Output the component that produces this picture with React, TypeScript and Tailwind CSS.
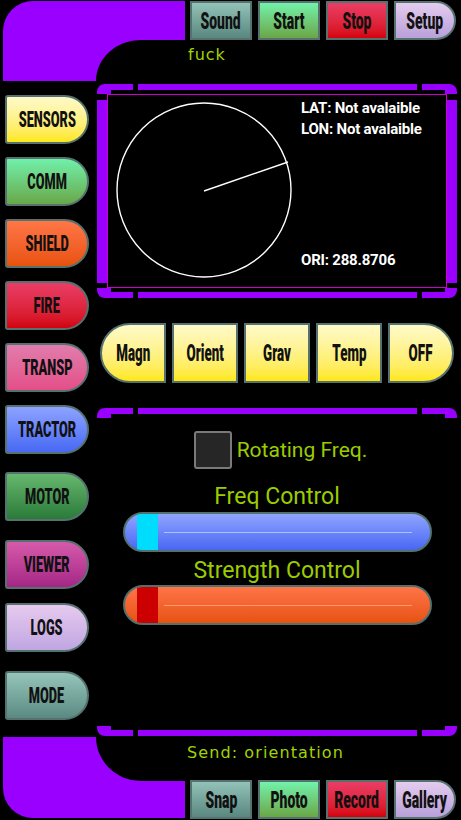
const PURPLE = "bg-[#9900ff]";

type NavItem = { label: string; colors: string; mt: string };

const navItems: NavItem[] = [
  { label: "SENSORS", colors: "from-[#fffac8] to-[#ffe800]", mt: "mt-[13px]" },
  { label: "COMM", colors: "from-[#70f0aa] to-[#68a848]", mt: "mt-[13px]" },
  { label: "SHIELD", colors: "from-[#ff7646] to-[#e85208]", mt: "mt-[13px]" },
  { label: "FIRE", colors: "from-[#ea3c66] to-[#d4000c]", mt: "mt-[13px]" },
  { label: "TRANSP", colors: "from-[#e07cac] to-[#e44e88]", mt: "mt-[13px]" },
  { label: "TRACTOR", colors: "from-[#8ea2ff] to-[#4868f4]", mt: "mt-[13px]" },
  { label: "MOTOR", colors: "from-[#66b86e] to-[#2a7a3a]", mt: "mt-[18px]" },
  { label: "VIEWER", colors: "from-[#d65aaa] to-[#a42686]", mt: "mt-[19px]" },
  { label: "LOGS", colors: "from-[#e6caee] to-[#c0a6e2]", mt: "mt-[14px]" },
  { label: "MODE", colors: "from-[#96c6ba] to-[#5a8a82]", mt: "mt-[19px]" },
];

const topButtons = [
  { label: "Sound", colors: "from-[#92c2b8] to-[#5a8880]" },
  { label: "Start", colors: "from-[#72f2aa] to-[#6aa646]" },
  { label: "Stop", colors: "from-[#ea3c64] to-[#d6000a]" },
  { label: "Setup", colors: "from-[#e4ccee] to-[#b8a0da]" },
];

const bottomButtons = [
  { label: "Snap", colors: "from-[#92c2b8] to-[#5a8880]" },
  { label: "Photo", colors: "from-[#72f2aa] to-[#6aa646]" },
  { label: "Record", colors: "from-[#ea3c64] to-[#d6000a]" },
  { label: "Gallery", colors: "from-[#e4ccee] to-[#b8a0da]" },
];

const modes = ["Magn", "Orient", "Grav", "Temp", "OFF"];

function Label({ text, size }: { text: string; size: string }) {
  return (
    <span className={`inline-block scale-x-[0.58] font-black leading-none text-[#111] ${size}`}>
      {text}
    </span>
  );
}

function ButtonRow({ items }: { items: { label: string; colors: string }[] }) {
  return (
    <div className="flex h-[39px] gap-[6px]">
      {items.map((b, i) => (
        <div
          key={b.label}
          className={`flex w-[62px] items-center justify-center border-2 border-[#557270] bg-linear-to-b ${b.colors} ${
            i === items.length - 1 ? "rounded-r-[20px]" : ""
          }`}
        >
          <Label text={b.label} size="text-[24px]" />
        </div>
      ))}
    </div>
  );
}

function BracketTop() {
  return (
    <div className="flex h-[10px] items-start">
      <div className="h-[10px] w-[36px] rounded-tl-[8px] border-t-[6px] border-l-[14px] border-[#9900ff]" />
      <div className={`mx-[5px] h-[6px] flex-1 ${PURPLE}`} />
      <div className="h-[10px] w-[35px] rounded-tr-[8px] border-t-[6px] border-r-[12px] border-[#9900ff]" />
    </div>
  );
}

function BracketBottom() {
  return (
    <div className="flex h-[10px] items-end">
      <div className="h-[10px] w-[36px] rounded-bl-[8px] border-b-[6px] border-l-[14px] border-[#9900ff]" />
      <div className={`mx-[5px] h-[6px] flex-1 ${PURPLE}`} />
      <div className="h-[10px] w-[35px] rounded-br-[8px] border-b-[6px] border-r-[12px] border-[#9900ff]" />
    </div>
  );
}

function Slider({ track, thumb, line }: { track: string; thumb: string; line: string }) {
  return (
    <div
      className={`mx-auto flex h-[40px] w-[309px] items-stretch overflow-hidden rounded-full border-2 border-[#52706e] bg-linear-to-b ${track}`}
    >
      <div className="w-[12px]" />
      <div className={`w-[21px] ${thumb}`} />
      <div className="ml-[6px] mr-[18px] flex flex-1 items-center">
        <div className={`h-px w-full ${line}`} />
      </div>
    </div>
  );
}

export default function App() {
  return (
    <div className="flex h-[820px] w-[461px] flex-col overflow-hidden bg-black font-['Roboto',sans-serif]">
      {/* header elbow */}
      <div className="flex h-[82px] pt-px">
        <div className={`ml-[3px] h-[80px] w-[93px] rounded-tl-[30px] ${PURPLE}`} />
        <div className="flex w-[89px] flex-col">
          <div className={`h-[39px] ${PURPLE}`} />
          <div className={`h-[41px] w-[45px] ${PURPLE}`}>
            <div className="h-full w-full rounded-tl-[45px_41px] bg-black" />
          </div>
        </div>
        <div className="ml-[5px] flex flex-col">
          <ButtonRow items={topButtons} />
          <div className="-ml-[2px] mt-[5px] font-['DejaVu_Sans',sans-serif] text-[16px] leading-[19px] tracking-[1px] text-[#a2d400]">
            fuck
          </div>
        </div>
      </div>

      {/* main */}
      <div className="flex h-[655px]">
        <div className="ml-[5px] flex w-[84px] flex-col">
          {navItems.map((n) => (
            <div
              key={n.label}
              className={`flex h-[49px] items-center justify-center rounded-l-[3px] rounded-r-[25px] border-2 border-[#557270] bg-linear-to-b ${n.colors} ${n.mt}`}
            >
              <Label text={n.label} size="text-[22px]" />
            </div>
          ))}
        </div>

        <div className="ml-[8px] flex w-[360px] flex-col">
          {/* sensor panel */}
          <div className="mt-[2px]">
            <BracketTop />
            <div className="flex h-[194px]">
              <div className={`mb-[5px] mt-[6px] w-[10px] ${PURPLE}`} />
              <div className="flex w-[340px] border border-[#cc00cc]">
                <svg width="193" height="192" viewBox="0 0 193 192" className="shrink-0">
                  <circle cx="96" cy="95" r="87" fill="none" stroke="#ffffff" strokeWidth="1.4" />
                  <line x1="96" y1="96" x2="180" y2="67" stroke="#ffffff" strokeWidth="1.4" />
                </svg>
                <div className="flex flex-1 flex-col justify-between pb-[16px] pt-[3px] text-[15px] font-bold leading-[21px] tracking-[-0.2px] text-white">
                  <div>
                    <div>LAT: Not avalaible</div>
                    <div>LON: Not avalaible</div>
                  </div>
                  <div>ORI: 288.8706</div>
                </div>
              </div>
              <div className={`mb-[5px] mt-[6px] w-[10px] ${PURPLE}`} />
            </div>
            <BracketBottom />
          </div>

          {/* modes */}
          <div className="ml-[3px] mt-[25px] flex h-[60px] gap-[6px]">
            {modes.map((m, i) => (
              <div
                key={m}
                className={`flex w-[66px] items-center justify-center border-2 border-[#557270] bg-linear-to-b from-[#fffac8] to-[#ffe800] ${
                  i === 0 ? "rounded-l-[30px]" : ""
                } ${i === modes.length - 1 ? "rounded-r-[30px]" : ""}`}
              >
                <Label text={m} size="text-[23px]" />
              </div>
            ))}
          </div>

          {/* controls panel */}
          <div className="mt-[25px] flex flex-1 flex-col">
            <BracketTop />
            <div className="mt-[13px] flex items-center justify-center gap-[5px] pl-[7px]">
              <div className="h-[38px] w-[38px] rounded-[3px] border-2 border-[#7a7a7a] bg-[#262626]" />
              <span className="text-[21px] leading-[26px] text-[#9ccc00]">Rotating Freq.</span>
            </div>
            <div className="mt-[15px] h-[26px] text-center text-[23px] leading-[26px] text-[#9ccc00]">
              Freq Control
            </div>
            <div className="mt-[2px]">
              <Slider
                track="from-[#90a4ff] to-[#4a66f2]"
                thumb="bg-[#00dcfc]"
                line="bg-[#b0c0ff]"
              />
            </div>
            <div className="mt-[6px] h-[26px] text-center text-[23px] leading-[26px] text-[#9ccc00]">
              Strength Control
            </div>
            <div className="mt-[1px]">
              <Slider
                track="from-[#ff7446] to-[#e6520c]"
                thumb="bg-[#cc0000]"
                line="bg-[#ff9a70]"
              />
            </div>
            <div className="mt-auto pb-px">
              <BracketBottom />
            </div>
          </div>
        </div>
      </div>

      {/* footer elbow */}
      <div className="flex h-[83px]">
        <div className={`ml-[3px] h-[81px] w-[93px] rounded-bl-[30px] ${PURPLE}`} />
        <div className="flex w-[89px] flex-col">
          <div className={`h-[44px] w-[45px] ${PURPLE}`}>
            <div className="h-full w-full rounded-bl-[45px_44px] bg-black" />
          </div>
          <div className={`h-[37px] ${PURPLE}`} />
        </div>
        <div className="ml-[5px] flex flex-col pb-[1px]">
          <div className="-ml-[3px] mt-[6px] font-['DejaVu_Sans',sans-serif] text-[16px] leading-[19px] tracking-[1.1px] text-[#a2d400]">
            Send: orientation
          </div>
          <div className="mt-auto">
            <ButtonRow items={bottomButtons} />
          </div>
        </div>
      </div>
    </div>
  );
}
